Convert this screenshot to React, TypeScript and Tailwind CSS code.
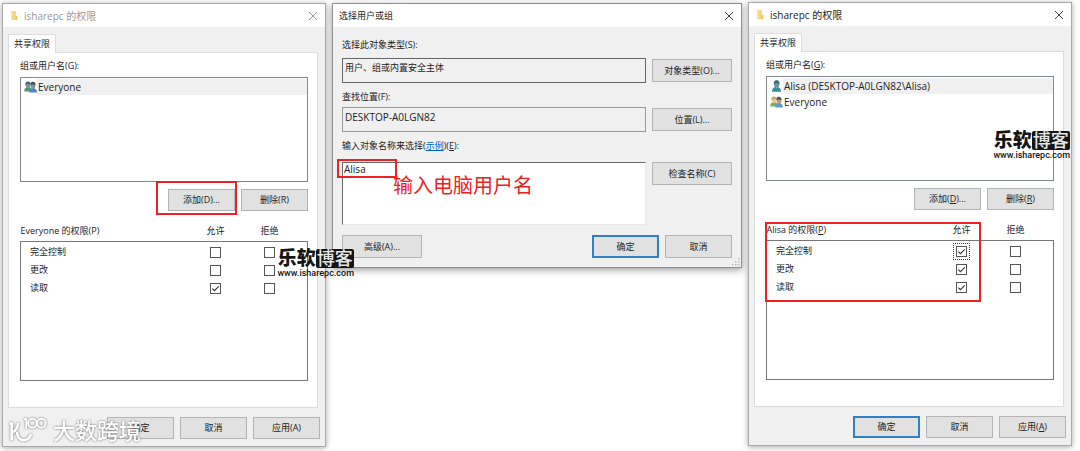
import type { ReactNode } from "react";

function CloseButton({ muted = false }: { muted?: boolean }) {
  return (
    <button type="button" aria-label="关闭" className={muted ? "text-[#999999]" : "text-[#444444]"}>
      <svg viewBox="0 0 10 10" className="block size-[10px]" fill="none" stroke="currentColor" strokeWidth="1">
        <path d="M1 1 9 9M9 1 1 9" />
      </svg>
    </button>
  );
}

function FolderIcon() {
  return (
    <svg viewBox="0 0 8 12" className="block h-[11px] w-[8px]">
      <path d="M1 1H6v5l1.500 1V11H1z" fill="#f8d475" />
      <path d="M1 1H2.500v9.500L1 11z" fill="#fbe3a0" />
      <path d="M6 6v4.500l1.500.5V7z" fill="#efc35a" />
    </svg>
  );
}

function GroupIcon({ faded = false }: { faded?: boolean }) {
  return (
    <svg viewBox="0 0 13 12" className="block h-[12px] w-[13px] shrink-0">
      <path d="M.2 10.500C.2 7.800 1.500 6.200 4 6c2.400 0 4 1.300 4 4.500z" fill={faded ? "#4f9a72" : "#7fae62"} />
      <rect x="1.600" y="1.200" width="4.800" height="5.800" rx="2.200" fill={faded ? "#7c9a98" : "#e6cd9a"} />
      <path d="M1.400 4.300C1 1.800 2.300.6 4 .6c1.700 0 2.800 1 2.700 2.900C5 3.400 3 2.700 1.400 4.300z" fill={faded ? "#4b6670" : "#c9a65a"} />
      <path d="M5.200 11.600c0-2.800 1.400-4.500 3.900-4.500 2.300 0 3.800 1.500 3.900 4.500z" fill={faded ? "#4b86c8" : "#5f9bd3"} />
      <rect x="6.700" y="1.700" width="4.600" height="5.700" rx="2.200" fill={faded ? "#7e93a4" : "#c59a6c"} />
      <path d="M6.500 4.300C6 2 7.200.7 8.900.7c1.900 0 2.900 1.300 2.600 3.700C10.400 3 8 3.200 6.500 4.300z" fill="#45535c" />
    </svg>
  );
}

function UserIcon() {
  return (
    <svg viewBox="0 0 13 12" className="block h-[12px] w-[13px] shrink-0">
      <path d="M2 11.800C2 8.700 3.200 7 6.400 6.700c3.100.2 4.700 2 4.700 5.100z" fill="#2f8f98" />
      <path d="M5.600 7 6.600 8.600 7.800 7z" fill="#a9d0d2" />
      <rect x="4" y=".6" width="5.200" height="6.800" rx="2.500" fill="#6b94a0" />
      <path d="M3.800 4C3.500 1.300 4.700.2 6.600.2c2 0 3.200 1.300 2.900 4.300C8.500 3 6 2.600 3.800 4z" fill="#3f6a7c" />
    </svg>
  );
}

function PushButton({ children, primary = false, className = "" }: { children: ReactNode; primary?: boolean; className?: string }) {
  const edge = primary ? "border-2 border-[#2f80c8]" : "border border-[#b4b4b4]";
  return (
    <button type="button" className={`flex items-center justify-center bg-[#e1e1e1] leading-3 whitespace-nowrap ${edge} ${className}`}>
      <span>{children}</span>
    </button>
  );
}

function Check({ label, checked = false, focused = false }: { label: string; checked?: boolean; focused?: boolean }) {
  return (
    <span className={`mx-auto grid size-[11px] ${focused ? "outline outline-1 outline-offset-2 outline-dotted outline-[#333333]" : ""}`}>
      <input
        type="checkbox"
        aria-label={label}
        defaultChecked={checked}
        className="peer col-start-1 row-start-1 size-[11px] appearance-none border border-[#555555] bg-white"
      />
      <svg
        viewBox="0 0 11 11"
        className="pointer-events-none invisible col-start-1 row-start-1 size-[11px] peer-checked:visible"
        fill="none"
        stroke="#333333"
        strokeWidth="1.100"
      >
        <path d="M2.300 5.600 4.400 7.700 8.800 3.300" />
      </svg>
    </span>
  );
}

function SiteMark({ className }: { className: string }) {
  return (
    <div className={`pointer-events-none absolute z-20 flex flex-col items-center text-[#151515] ${className}`}>
      <div className="flex h-[19px] items-center text-[19px] leading-[19px] font-black">
        <span>乐软</span>
        <span className="rounded-xs bg-[#151515] px-px text-[18px] leading-[19px] font-medium text-[#e6e6e6]">博客</span>
      </div>
      <span className="font-['Roboto',sans-serif] text-[9px] leading-[11px] font-medium">www.isharepc.com</span>
    </div>
  );
}

type Principal = { name: string; icon: ReactNode };
type Permission = { name: string; allow?: boolean; deny?: boolean; focused?: boolean };

type PermissionsProps = {
  muted?: boolean;
  className: string;
  groupKey: ReactNode;
  addKey: ReactNode;
  removeKey: ReactNode;
  permKey: ReactNode;
  applyKey: ReactNode;
  subject: string;
  principals: Principal[];
  permissions: Permission[];
  primaryOk?: boolean;
  markAdd?: boolean;
  markTable?: boolean;
  children?: ReactNode;
};

function PermissionsWindow(p: PermissionsProps) {
  return (
    <section className={`relative border border-[#a9a9a9] bg-[#f0f0f0] shadow-[0_1px_6px_rgba(0,0,0,0.35)] ${p.className}`}>
      <header className="flex h-[23px] items-center bg-white pr-[7px] pl-[7px]">
        <FolderIcon />
        <h2 className={`ml-[6px] flex-1 text-[10px] leading-3 ${p.muted ? "text-[#999999]" : "text-[#222222]"}`}>isharepc 的权限</h2>
        <CloseButton muted={p.muted} />
      </header>

      <div className="pt-[7px] pr-[7px] pl-[5px]">
        <div role="tablist" className="flex">
          <button type="button" role="tab" aria-selected="true" className="relative -mb-px h-[19px] border border-b-0 border-[#dcdcdc] bg-white px-[5px] leading-3">
            共享权限
          </button>
        </div>
        <div className="border border-[#dcdcdc] bg-white pt-[7px] pr-[9px] pb-[26px] pl-[11px]">
          <p className="leading-3">组或用户名({p.groupKey}):</p>
          <ul role="listbox" aria-label="组或用户名" className="mt-[5px] h-[105px] border border-[#828790] py-px pl-[3px]">
            {p.principals.map((item, i) => (
              <li key={item.name} role="option" aria-selected={i === 0} className="flex h-4 items-center">
                {item.icon}
                <span className={`flex h-4 flex-1 items-center pl-px text-[10px] leading-3 ${i === 0 ? "bg-[#f0f0f0]" : ""}`}>{item.name}</span>
              </li>
            ))}
          </ul>
          <div className="mt-[7px] flex justify-end gap-[6px]">
            <div className="relative">
              <PushButton className="h-[22px] w-[67px]">添加({p.addKey})...</PushButton>
              {p.markAdd && <span className="absolute -top-2 -right-[2px] -bottom-1 -left-3 border-2 border-[#ee2222]" />}
            </div>
            <PushButton className="h-[22px] w-[67px]">删除({p.removeKey})</PushButton>
          </div>

          <div className="relative mt-[11px]">
            <table className="w-full table-fixed border-collapse leading-3">
              <colgroup>
                <col />
                <col className="w-[54px]" />
                <col className="w-[54px]" />
                <col className="w-[11px]" />
              </colgroup>
              <thead>
                <tr className="h-[19px]">
                  <th className="p-0 text-left font-normal whitespace-nowrap">
                    {p.subject} 的权限({p.permKey})
                  </th>
                  <th className="p-0 font-normal">允许</th>
                  <th className="p-0 font-normal">拒绝</th>
                  <td className="p-0" />
                </tr>
              </thead>
              <tbody className="border border-[#777777]">
                <tr className="h-[2px]">
                  <td colSpan={4} className="p-0" />
                </tr>
                {p.permissions.map((row) => (
                  <tr key={row.name} className="h-[18px]">
                    <th className="p-0 pl-[9px] text-left font-normal">{row.name}</th>
                    <td className="p-0">
                      <Check label={`允许 ${row.name}`} checked={row.allow} focused={row.focused} />
                    </td>
                    <td className="p-0">
                      <Check label={`拒绝 ${row.name}`} checked={row.deny} />
                    </td>
                    <td className="p-0" />
                  </tr>
                ))}
                <tr className="h-[83px]">
                  <td colSpan={4} className="p-0" />
                </tr>
              </tbody>
            </table>
            {p.markTable && <span className="pointer-events-none absolute top-px right-[73px] -left-px h-[80px] border-2 border-[#ee2222]" />}
          </div>
        </div>
      </div>

      <footer className="flex justify-end gap-[6px] pt-[9px] pr-[5px] pb-[7px]">
        <PushButton primary={p.primaryOk} className="h-[22px] w-[67px]">确定</PushButton>
        <PushButton className="h-[22px] w-[67px]">取消</PushButton>
        <PushButton className="h-[22px] w-[67px]">应用({p.applyKey})</PushButton>
      </footer>
      {p.children}
    </section>
  );
}

function SelectUserWindow() {
  return (
    <section className="relative mt-[3px] border border-[#8f8f8f] bg-[#f0f0f0] shadow-[0_2px_7px_rgba(0,0,0,0.4)]">
      <header className="flex h-[23px] items-center justify-between bg-white pr-[7px] pl-[6px]">
        <h2 className="leading-3">选择用户或组</h2>
        <CloseButton />
      </header>
      <div className="px-[9px] pt-3 pb-[9px]">
        <label htmlFor="object-type" className="block leading-3">选择此对象类型(S):</label>
        <div className="mt-[7px] flex items-center gap-[6px]">
          <input id="object-type" readOnly defaultValue="用户、组或内置安全主体" className="h-[25px] min-w-0 flex-1 border border-[#666666] bg-transparent px-[2px] pb-[6px]" />
          <PushButton className="h-[23px] w-[80px]">对象类型(O)...</PushButton>
        </div>
        <label htmlFor="location" className="mt-2 block leading-3">查找位置(F):</label>
        <div className="mt-1 flex items-center gap-[6px]">
          <input id="location" readOnly defaultValue="DESKTOP-A0LGN82" className="h-[25px] min-w-0 flex-1 border border-[#999999] bg-transparent px-[2px] pb-[6px] text-[10px]" />
          <PushButton className="h-[23px] w-[80px]">位置(L)...</PushButton>
        </div>
        <div className="mt-2 leading-3">
          <label htmlFor="object-names">输入对象名称来选择</label>(
          <a href="#examples" className="text-[#0066cc] underline">示例</a>)(<u>E</u>):
        </div>
        <div className="mt-[10px] flex items-start gap-[6px]">
          <div className="relative min-w-0 flex-1">
            <textarea id="object-names" defaultValue="Alisa" className="block h-[63px] w-full resize-none border border-t-[#696969] border-r-[#e8e8e8] border-b-[#e8e8e8] border-l-[#696969] bg-white px-px text-[10px] leading-3" />
            <span className="pointer-events-none absolute -top-[3px] -left-[5px] h-[19px] w-[60px] border-2 border-[#ee2222]" />
            <span className="pointer-events-none absolute top-3 left-[51px] text-[20px] leading-6 whitespace-nowrap text-[#ee2222]">输入电脑用户名</span>
          </div>
          <PushButton className="h-[23px] w-[80px]">检查名称(C)</PushButton>
        </div>
        <div className="mt-[10px] flex gap-[6px]">
          <PushButton className="mr-auto h-[23px] w-[80px]">高级(A)...</PushButton>
          <PushButton primary className="h-[23px] w-[67px]">确定</PushButton>
          <PushButton className="h-[23px] w-[67px]">取消</PushButton>
        </div>
      </div>
      <svg viewBox="0 0 8 8" className="absolute right-px bottom-px size-2" fill="#b8b8b8">
        <path d="M6 0h1.500v1.500H6zM3 3h1.500v1.500H3zM6 3h1.500v1.500H6zM0 6h1.500v1.500H0zM3 6h1.500v1.500H3zM6 6h1.500v1.500H6z" />
      </svg>
    </section>
  );
}

function PublisherMark() {
  return (
    <div className="pointer-events-none absolute bottom-[2px] left-[6px] z-20 flex items-center gap-1 text-white drop-shadow-[0_0_1px_rgba(90,90,90,0.9)]">
      <svg viewBox="0 0 120 80" className="block h-[27px] w-10" fill="none" stroke="currentColor" strokeWidth="8">
        <path d="M2 22h6v50M8 50C18 45 27 36 27 20M24 46c0 32 34 34 42 8" />
        <path d="M45 9h7v29" strokeWidth="6" />
        <circle cx="70" cy="21" r="13" strokeWidth="6" />
        <circle cx="97" cy="21" r="13" strokeWidth="6" />
      </svg>
      <span className="text-[22px] leading-7 font-medium">大数跨境</span>
    </div>
  );
}

export default function App() {
  return (
    <main className="grid min-h-screen grid-cols-[324fr_410fr_324fr] items-start gap-x-[6px] overflow-hidden bg-white pr-2 pl-[2px] font-['Open_Sans','Noto_Sans_CJK_SC',sans-serif] text-[9px] text-[#222222]">
      <PermissionsWindow
        muted
        markAdd
        className="mt-[3px]"
        groupKey="G"
        addKey="D"
        removeKey="R"
        permKey="P"
        applyKey="A"
        subject="Everyone"
        principals={[{ name: "Everyone", icon: <GroupIcon faded /> }]}
        permissions={[{ name: "完全控制" }, { name: "更改" }, { name: "读取", allow: true }]}
      >
        <SiteMark className="top-[245px] -right-[29px]" />
        <PublisherMark />
      </PermissionsWindow>
      <SelectUserWindow />
      <PermissionsWindow
        primaryOk
        markTable
        className="mt-[2px]"
        groupKey={<u>G</u>}
        addKey={<u>D</u>}
        removeKey={<u>R</u>}
        permKey={<u>P</u>}
        applyKey={<u>A</u>}
        subject="Alisa"
        principals={[
          { name: "Alisa (DESKTOP-A0LGN82\\Alisa)", icon: <UserIcon /> },
          { name: "Everyone", icon: <GroupIcon /> },
        ]}
        permissions={[
          { name: "完全控制", allow: true, focused: true },
          { name: "更改", allow: true },
          { name: "读取", allow: true },
        ]}
      >
        <SiteMark className="top-[128px] right-px" />
      </PermissionsWindow>
    </main>
  );
}
